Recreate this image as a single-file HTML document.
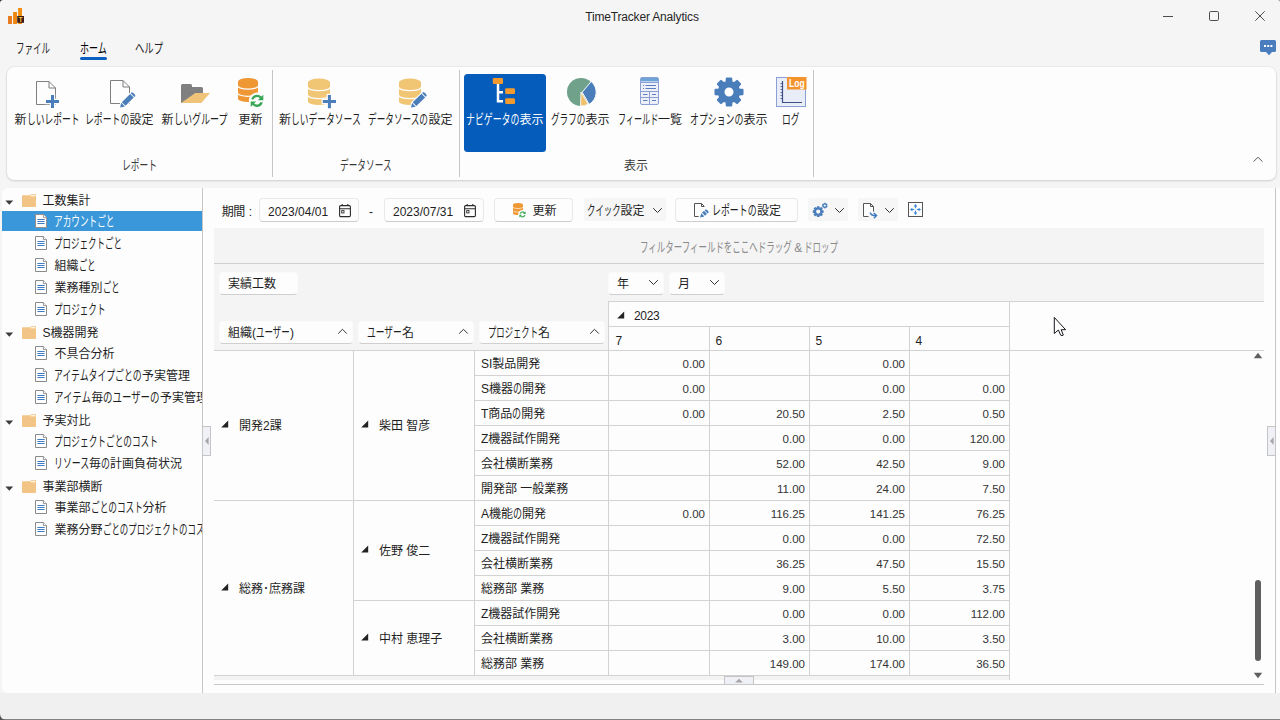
<!DOCTYPE html>
<html lang="ja"><head><meta charset="utf-8"><title>TimeTracker Analytics</title>
<style>
html,body{margin:0;padding:0;}
body{width:1280px;height:720px;overflow:hidden;background:#f5f5f5;font-family:"Liberation Sans","Noto Sans CJK JP",sans-serif;font-size:12px;color:#1f1f1f;}
#app{position:relative;width:1280px;height:720px;overflow:hidden;background:#f5f5f5;}
#app div, #app svg{position:absolute;box-sizing:border-box;}
.t{white-space:nowrap;}
.k{display:inline-block;transform-origin:0 76%;white-space:nowrap;}
.c{text-align:center;}
.r{text-align:right;}
.btn{background:#fdfdfd;border:1px solid #e9e9e9;border-bottom-color:#cdcdcd;border-radius:4px;}
.hl{background:#d2d2d2;}
.fb{border-color:#fafafa;border-bottom-color:#cfcfcf;}

</style></head>
<body>
<div id="app">
<!-- title bar -->
<svg style="left:8px;top:8px" width="18" height="18" viewBox="0 0 18 18">
<rect x="0" y="8" width="4" height="8" fill="#ea7a1f"/><rect x="5.1" y="4" width="3.9" height="12" fill="#ee8614"/><rect x="10.1" y="0" width="3.9" height="16" fill="#f28d10"/>
<rect x="9.2" y="8" width="6.8" height="6.8" fill="#3b1a1a"/><text x="12.6" y="13.9" font-size="7" font-weight="bold" text-anchor="middle" fill="#f8c32c" font-family="Liberation Sans, sans-serif">T</text></svg>
<svg style="left:0;top:0" width="4" height="4" viewBox="0 0 4 4"><path d="M0 0H3.2A3.2 3.2 0 0 0 0 3.2Z" fill="#1a2630"/></svg>
<svg style="left:1277px;top:0" width="3" height="3" viewBox="0 0 3 3"><path d="M3 0H0.8A2.2 2.2 0 0 1 3 2.2Z" fill="#8a8a8a"/></svg>
<div class="t c" style="left:0px;top:7px;height:20px;line-height:20px;width:1284px;font-size:12px;color:#262626;letter-spacing:-0.17px;">TimeTracker Analytics</div>
<svg style="left:1160px;top:8px" width="110" height="16" viewBox="0 0 110 16" fill="none" stroke="#3a3a3a" stroke-width="0.9">
<path d="M3 8.5H13"/><rect x="49.5" y="3.5" width="9" height="9" rx="1.2"/><path d="M95.3 3.3L104.7 12.7M104.7 3.3L95.3 12.7"/></svg>
<svg style="left:1260px;top:40px" width="16" height="16" viewBox="0 0 16 16"><path d="M1.5 0H14.5Q16 0 16 1.5V10.5Q16 12 14.5 12H12L9 15.2L6 12H1.5Q0 12 0 10.5V1.5Q0 0 1.5 0Z" fill="#4a7dbd"/>
<rect x="4" y="5" width="2" height="2" fill="#fff"/><rect x="7.2" y="5" width="2" height="2" fill="#fff"/><rect x="10.4" y="5" width="2" height="2" fill="#fff"/></svg>
<!-- menu -->
<div class="t " style="left:16px;top:39.4px;height:20px;line-height:20px;"><span class="k" style="width:34.0px;transform:scale(0.708,1.12)">ファイル</span></div>
<div class="t " style="left:80px;top:39.4px;height:20px;line-height:20px;color:#000;"><span class="k" style="width:27.0px;transform:scale(0.750,1.12)">ホーム</span></div>
<div class="" style="left:80px;top:57px;width:27px;height:2.6px;background:#0a5fc2;border-radius:1.5px;"></div>
<div class="t " style="left:135px;top:39.4px;height:20px;line-height:20px;"><span class="k" style="width:28.0px;transform:scale(0.778,1.12)">ヘルプ</span></div>
<!-- ribbon -->
<div class="" style="left:7px;top:66.5px;width:1269px;height:113.2px;background:#fdfdfd;border-radius:7px;box-shadow:0 0 0 0.6px rgba(0,0,0,.07),0 1px 2.5px rgba(0,0,0,.13);"></div>
<div class="" style="left:272px;top:70px;width:1px;height:107px;background:#c6c6c6;"></div>
<div class="" style="left:459px;top:70px;width:1px;height:107px;background:#c6c6c6;"></div>
<div class="" style="left:813px;top:70px;width:1px;height:107px;background:#c6c6c6;"></div>
<div class="" style="left:464px;top:74px;width:82px;height:78px;background:#055cbb;border-radius:3.5px;"></div>
<div class="t " style="left:14.5px;top:109.6px;height:20px;line-height:20px;color:#1f1f1f;">新<span class="k" style="width:52.6px;transform:scale(0.731,1.12)">しいレポート</span></div>
<div class="t " style="left:85.3px;top:109.6px;height:20px;line-height:20px;color:#1f1f1f;"><span class="k" style="width:44.2px;transform:scale(0.737,1.12)">レポートの</span>設定</div>
<div class="t " style="left:161.5px;top:109.6px;height:20px;line-height:20px;color:#1f1f1f;">新<span class="k" style="width:54.1px;transform:scale(0.751,1.12)">しいグループ</span></div>
<div class="t " style="left:238.5px;top:109.6px;height:20px;line-height:20px;color:#1f1f1f;">更新</div>
<div class="t " style="left:279px;top:109.6px;height:20px;line-height:20px;color:#1f1f1f;">新<span class="k" style="width:70.1px;transform:scale(0.730,1.12)">しいデータソース</span></div>
<div class="t " style="left:368.1px;top:109.6px;height:20px;line-height:20px;color:#1f1f1f;"><span class="k" style="width:60.4px;transform:scale(0.719,1.12)">データソースの</span>設定</div>
<div class="t " style="left:466.1px;top:109.6px;height:20px;line-height:20px;color:#fff;"><span class="k" style="width:53.4px;transform:scale(0.742,1.12)">ナビゲータの</span>表示</div>
<div class="t " style="left:551.1px;top:109.6px;height:20px;line-height:20px;color:#1f1f1f;"><span class="k" style="width:34.4px;transform:scale(0.717,1.12)">グラフの</span>表示</div>
<div class="t " style="left:617.6px;top:109.6px;height:20px;line-height:20px;color:#1f1f1f;"><span class="k" style="width:40.4px;transform:scale(0.673,1.12)">フィールド</span>一覧</div>
<div class="t " style="left:690.1px;top:109.6px;height:20px;line-height:20px;color:#1f1f1f;"><span class="k" style="width:53.4px;transform:scale(0.742,1.12)">オプションの</span>表示</div>
<div class="t " style="left:781.6px;top:109.6px;height:20px;line-height:20px;color:#1f1f1f;"><span class="k" style="width:17.5px;transform:scale(0.729,1.12)">ログ</span></div>
<div class="t " style="left:122px;top:155.6px;height:20px;line-height:20px;color:#3a3a3a;"><span class="k" style="width:35.0px;transform:scale(0.729,1.12)">レポート</span></div>
<div class="t " style="left:339.5px;top:155.6px;height:20px;line-height:20px;color:#3a3a3a;"><span class="k" style="width:52.0px;transform:scale(0.722,1.12)">データソース</span></div>
<div class="t " style="left:624px;top:155.6px;height:20px;line-height:20px;color:#3a3a3a;">表示</div>
<svg style="left:1251.5px;top:154.2px" width="12" height="10" viewBox="0 0 12 10" fill="none" stroke="#555" stroke-width="1"><path d="M1.6 7.6L6 3.2L10.4 7.6"/></svg>
<!-- ribbon icons -->
<svg style="left:30px;top:76px" width="34" height="34" viewBox="0 0 34 34" ><path d="M6.5 5.5H19L25.5 12V28.5H6.5Z M19 5.5V12H25.5" fill="#fdfdfd" stroke="#7f7f7f" stroke-width="1"/><path d="M21 19h3v5h5v3h-5v5h-3v-5h-5v-3h5z" fill="#4a7ebb" stroke="#fdfdfd" stroke-width="2.4" paint-order="stroke"/></svg>
<svg style="left:104px;top:76px" width="36" height="34" viewBox="0 0 36 34" ><path d="M6.5 4.5H19L25.5 11V27.5H6.5Z M19 4.5V11H25.5" fill="#fdfdfd" stroke="#7f7f7f" stroke-width="1"/><path d="M16.20 31.50 L20.87 30.51 L32.04 19.34 L28.36 15.66 L17.19 26.83 Z" fill="#fdfdfd" stroke="#fdfdfd" stroke-width="2.2" stroke-linejoin="round"/><path d="M16.20 31.50 L20.87 30.51 L17.19 26.83 Z" fill="#4a7ebb"/><path d="M21.50 29.87 L29.78 21.60 L26.10 17.92 L17.83 26.20 Z" fill="#4a7ebb"/><path d="M30.34 21.04 L31.47 19.90 Q30.62 17.08 27.80 16.23 L26.66 17.36 Z" fill="#4a7ebb"/></svg>
<svg style="left:178px;top:80px" width="36" height="28" viewBox="0 0 36 28" ><path d="M3 5.5Q3 4 4.5 4H12.5Q14 4 14 5.5V7H23.5Q25 7 25 8.5V13H17.5L8 23H3Z" fill="#808080"/><path d="M3 23L17.4 13H32L23.3 23Z" fill="#f0c478"/></svg>
<svg style="left:234px;top:74px" width="34" height="36" viewBox="0 0 34 36" ><path d="M4 7.6A10 3.6 0 0 1 24 7.6V24.4A10 3.6 0 0 1 4 24.4Z" fill="#ee9733"/><path d="M3.5 11.5A10.5 3.6 0 0 0 24.5 11.5" fill="none" stroke="#fdfdfd" stroke-width="1.3"/><path d="M3.5 18.7A10.5 3.6 0 0 0 24.5 18.7" fill="none" stroke="#fdfdfd" stroke-width="1.3"/><circle cx="23" cy="26.8" r="8.2" fill="#fdfdfd"/><path d="M17.2 25.2A6 6 0 0 1 27.4 22.6L29.3 20.7V26.2H23.8L25.8 24.2A3.8 3.8 0 0 0 19.5 25.6Z" fill="#3aa757"/><path d="M28.8 28.4A6 6 0 0 1 18.6 31L16.7 32.9V27.4H22.2L20.2 29.4A3.8 3.8 0 0 0 26.5 28Z" fill="#3aa757"/></svg>
<svg style="left:304px;top:74px" width="36" height="36" viewBox="0 0 36 36" ><path d="M4 8.2A11 3.6 0 0 1 26 8.2V27.4A11 3.6 0 0 1 4 27.4Z" fill="#f0c675"/><path d="M3.5 13.06A11.5 3.6 0 0 0 26.5 13.06" fill="none" stroke="#fdfdfd" stroke-width="1.3"/><path d="M3.5 20.98A11.5 3.6 0 0 0 26.5 20.98" fill="none" stroke="#fdfdfd" stroke-width="1.3"/><path d="M23.9 21h3v5.1h5.1v3h-5.1v5.1h-3v-5.1h-5.1v-3h5.1z" fill="#4a7ebb" stroke="#fdfdfd" stroke-width="2.4" paint-order="stroke"/></svg>
<svg style="left:395px;top:74px" width="36" height="36" viewBox="0 0 36 36" ><path d="M4 8.2A11 3.6 0 0 1 26 8.2V27.4A11 3.6 0 0 1 4 27.4Z" fill="#f0c675"/><path d="M3.5 13.06A11.5 3.6 0 0 0 26.5 13.06" fill="none" stroke="#fdfdfd" stroke-width="1.3"/><path d="M3.5 20.98A11.5 3.6 0 0 0 26.5 20.98" fill="none" stroke="#fdfdfd" stroke-width="1.3"/><path d="M16.00 33.60 L20.68 32.66 L32.42 21.16 L28.78 17.44 L17.04 28.94 Z" fill="#fdfdfd" stroke="#fdfdfd" stroke-width="2.2" stroke-linejoin="round"/><path d="M16.00 33.60 L20.68 32.66 L17.04 28.94 Z" fill="#4a7ebb"/><path d="M21.32 32.03 L30.13 23.40 L26.49 19.68 L17.68 28.31 Z" fill="#4a7ebb"/><path d="M30.70 22.84 L31.85 21.72 Q31.03 18.88 28.21 18.00 L27.07 19.12 Z" fill="#4a7ebb"/></svg>
<svg style="left:490px;top:76px" width="28" height="30" viewBox="0 0 28 30" ><rect x="2.8" y="2" width="10.2" height="6" rx="1.2" fill="#f39a2e"/><rect x="15.2" y="12.2" width="9.8" height="5.8" rx="1.2" fill="#f39a2e"/><rect x="15.2" y="22.2" width="9.8" height="5.8" rx="1.2" fill="#f39a2e"/><path d="M8 8V25.2H13M8 16.2H13" fill="none" stroke="#fff" stroke-width="2.5"/></svg>
<svg style="left:565px;top:76px" width="34" height="32" viewBox="0 0 34 32" ><circle cx="16" cy="16" r="14" fill="#6fa18b"/><path d="M16 16L23.00 28.12 A14 14 0 0 1 15.51 29.99 Z" fill="#f0c06a" stroke="#fdfdfd" stroke-width="0.9"/><path d="M17.2 16.2L26.20 5.48 A14 14 0 0 1 24.20 28.32 Z" fill="#4a7ebb" stroke="#fdfdfd" stroke-width="1"/></svg>
<svg style="left:638px;top:75px" width="24" height="32" viewBox="0 0 24 32" ><rect x="2.5" y="2.5" width="18" height="27" rx="1.5" fill="#edf0f9" stroke="#8c9fd2" stroke-width="1"/><rect x="3" y="3" width="17" height="3.4" fill="#6fa3d8"/><path d="M3 7.5H20M3 16.5H20M3 22.5H20M11.5 16.5V29" stroke="#8c9fd2" stroke-width="1" fill="none"/><path d="M5 10.5H6M7.5 10.5H18M5 13.5H6M7.5 13.5H18M5 19.5H9.5M14 19.5H18M5 25.5H9.5M14 25.5H18" stroke="#5c7fc4" stroke-width="1" fill="none"/></svg>
<svg style="left:712px;top:75px" width="34" height="34" viewBox="0 0 34 34" ><path d="M14.87 3.57L19.13 3.57L19.38 7.08L22.33 8.30L24.99 6.00L28.00 9.01L25.70 11.67L26.92 14.62L30.43 14.87L30.43 19.13L26.92 19.38L25.70 22.33L28.00 24.99L24.99 28.00L22.33 25.70L19.38 26.92L19.13 30.43L14.87 30.43L14.62 26.92L11.67 25.70L9.01 28.00L6.00 24.99L8.30 22.33L7.08 19.38L3.57 19.13L3.57 14.87L7.08 14.62L8.30 11.67L6.00 9.01L9.01 6.00L11.67 8.30L14.62 7.08ZM11.4 17a5.6 5.6 0 1 0 11.2 0a5.6 5.6 0 1 0 -11.2 0Z" fill="#4a7ebb" fill-rule="evenodd" stroke="#4a7ebb" stroke-width="2.2" stroke-linejoin="round"/></svg>
<svg style="left:774px;top:75px" width="34" height="34" viewBox="0 0 34 34" ><rect x="2.5" y="2.5" width="29" height="29" fill="#e9edf8" stroke="#8c9fd2" stroke-width="1"/><path d="M8.5 6V27.5H28" fill="none" stroke="#3d4f86" stroke-width="1.2"/><path d="M6.5 8.5H8.5M6.5 11.5H8.5M6.5 14.5H8.5M6.5 17.5H8.5M6.5 20.5H8.5M6.5 23.5H8.5" stroke="#3d4f86" stroke-width="0.8"/><rect x="13" y="2" width="19.5" height="12.5" fill="#f2932b"/><text x="22.8" y="11.6" font-size="10" text-anchor="middle" fill="#fff" font-family="Liberation Sans, sans-serif" font-weight="bold" textLength="15.5" lengthAdjust="spacingAndGlyphs">Log</text></svg>
<!-- tree -->
<div class="" style="left:2px;top:188px;width:201px;height:505px;background:#fdfdfd;border-radius:6px 0 0 6px;"></div>
<div class="" style="left:202px;top:188px;width:1px;height:505px;background:#c6c6c6;"></div>
<div class="" style="left:203px;top:188px;width:1077px;height:505px;background:#fdfdfd;"></div>
<div class="" style="left:2px;top:211px;width:200px;height:20px;background:#3a97d9;"></div>
<div style="left:2px;top:188px;width:200px;height:505px;overflow:hidden;">
<svg style="left:2.5px;top:11.5px" width="9" height="6" viewBox="0 0 9 6"><path d="M0.4 0.6H8.2L4.3 4.7Z" fill="#3c3c3c"/></svg>
<svg style="left:20px;top:5.5px" width="14" height="13" viewBox="0 0 14 13"><path d="M0 2.2Q0 1.2 1 1.2H8L10 0H13Q14 0 14 1V12Q14 13 13 13H1Q0 13 0 12Z" fill="#f2c486"/><path d="M8 1.2L10 0H13Q14 0 14 1V3H8.2Z" fill="#f4cf9a"/><rect x="9" y="1" width="4" height="1.2" fill="#fff6e8"/></svg>
<div class="t " style="left:40.5px;top:2.2px;height:22px;line-height:22px;color:#1f1f1f;">工数集計</div>
<svg style="left:33px;top:25.5px" width="12" height="14" viewBox="0 0 12 14"><path d="M0.5 0.5H8.4L11.5 3.6V13.5H0.5Z" fill="#fff" stroke="#9a8f88" stroke-width="1"/><path d="M8.4 0.5V3.6H11.5" fill="#fff" stroke="#9a8f88" stroke-width="0.9"/><path d="M2.4 5.5H9.6M2.4 7.5H9.6M2.4 9.5H9.6" stroke="#3f7cc4" stroke-width="1"/></svg>
<div class="t " style="left:51.5px;top:23.4px;height:22px;line-height:22px;color:#fff;"><span class="k" style="width:60.5px;transform:scale(0.720,1.12)">アカウントごと</span></div>
<svg style="left:33px;top:47.5px" width="12" height="14" viewBox="0 0 12 14"><path d="M0.5 0.5H8.4L11.5 3.6V13.5H0.5Z" fill="#fff" stroke="#8a8a8a" stroke-width="1"/><path d="M8.4 0.5V3.6H11.5" fill="#fff" stroke="#8a8a8a" stroke-width="0.9"/><path d="M2.4 5.5H9.6M2.4 7.5H9.6M2.4 9.5H9.6" stroke="#3f7cc4" stroke-width="1"/></svg>
<div class="t " style="left:51.5px;top:45.4px;height:22px;line-height:22px;color:#1f1f1f;"><span class="k" style="width:68.0px;transform:scale(0.708,1.12)">プロジェクトごと</span></div>
<svg style="left:33px;top:69.5px" width="12" height="14" viewBox="0 0 12 14"><path d="M0.5 0.5H8.4L11.5 3.6V13.5H0.5Z" fill="#fff" stroke="#8a8a8a" stroke-width="1"/><path d="M8.4 0.5V3.6H11.5" fill="#fff" stroke="#8a8a8a" stroke-width="0.9"/><path d="M2.4 5.5H9.6M2.4 7.5H9.6M2.4 9.5H9.6" stroke="#3f7cc4" stroke-width="1"/></svg>
<div class="t " style="left:52.5px;top:67.4px;height:22px;line-height:22px;color:#1f1f1f;">組織<span class="k" style="width:16.5px;transform:scale(0.688,1.12)">ごと</span></div>
<svg style="left:33px;top:91.5px" width="12" height="14" viewBox="0 0 12 14"><path d="M0.5 0.5H8.4L11.5 3.6V13.5H0.5Z" fill="#fff" stroke="#8a8a8a" stroke-width="1"/><path d="M8.4 0.5V3.6H11.5" fill="#fff" stroke="#8a8a8a" stroke-width="0.9"/><path d="M2.4 5.5H9.6M2.4 7.5H9.6M2.4 9.5H9.6" stroke="#3f7cc4" stroke-width="1"/></svg>
<div class="t " style="left:52.5px;top:89.4px;height:22px;line-height:22px;color:#1f1f1f;">業務種別<span class="k" style="width:16.5px;transform:scale(0.688,1.12)">ごと</span></div>
<svg style="left:33px;top:113.5px" width="12" height="14" viewBox="0 0 12 14"><path d="M0.5 0.5H8.4L11.5 3.6V13.5H0.5Z" fill="#fff" stroke="#8a8a8a" stroke-width="1"/><path d="M8.4 0.5V3.6H11.5" fill="#fff" stroke="#8a8a8a" stroke-width="0.9"/><path d="M2.4 5.5H9.6M2.4 7.5H9.6M2.4 9.5H9.6" stroke="#3f7cc4" stroke-width="1"/></svg>
<div class="t " style="left:51.5px;top:111.4px;height:22px;line-height:22px;color:#1f1f1f;"><span class="k" style="width:51.5px;transform:scale(0.715,1.12)">プロジェクト</span></div>
<svg style="left:2.5px;top:143.5px" width="9" height="6" viewBox="0 0 9 6"><path d="M0.4 0.6H8.2L4.3 4.7Z" fill="#3c3c3c"/></svg>
<svg style="left:20px;top:137.5px" width="14" height="13" viewBox="0 0 14 13"><path d="M0 2.2Q0 1.2 1 1.2H8L10 0H13Q14 0 14 1V12Q14 13 13 13H1Q0 13 0 12Z" fill="#f2c486"/><path d="M8 1.2L10 0H13Q14 0 14 1V3H8.2Z" fill="#f4cf9a"/><rect x="9" y="1" width="4" height="1.2" fill="#fff6e8"/></svg>
<div class="t " style="left:40.5px;top:134.2px;height:22px;line-height:22px;color:#1f1f1f;">S機器開発</div>
<svg style="left:33px;top:157.5px" width="12" height="14" viewBox="0 0 12 14"><path d="M0.5 0.5H8.4L11.5 3.6V13.5H0.5Z" fill="#fff" stroke="#8a8a8a" stroke-width="1"/><path d="M8.4 0.5V3.6H11.5" fill="#fff" stroke="#8a8a8a" stroke-width="0.9"/><path d="M2.4 5.5H9.6M2.4 7.5H9.6M2.4 9.5H9.6" stroke="#3f7cc4" stroke-width="1"/></svg>
<div class="t " style="left:52.5px;top:155.4px;height:22px;line-height:22px;color:#1f1f1f;">不具合分析</div>
<svg style="left:33px;top:179.5px" width="12" height="14" viewBox="0 0 12 14"><path d="M0.5 0.5H8.4L11.5 3.6V13.5H0.5Z" fill="#fff" stroke="#8a8a8a" stroke-width="1"/><path d="M8.4 0.5V3.6H11.5" fill="#fff" stroke="#8a8a8a" stroke-width="0.9"/><path d="M2.4 5.5H9.6M2.4 7.5H9.6M2.4 9.5H9.6" stroke="#3f7cc4" stroke-width="1"/></svg>
<div class="t " style="left:51.5px;top:177.4px;height:22px;line-height:22px;color:#1f1f1f;"><span class="k" style="width:88.5px;transform:scale(0.738,1.12)">アイテムタイプごとの</span>予実管理</div>
<svg style="left:33px;top:201.5px" width="12" height="14" viewBox="0 0 12 14"><path d="M0.5 0.5H8.4L11.5 3.6V13.5H0.5Z" fill="#fff" stroke="#8a8a8a" stroke-width="1"/><path d="M8.4 0.5V3.6H11.5" fill="#fff" stroke="#8a8a8a" stroke-width="0.9"/><path d="M2.4 5.5H9.6M2.4 7.5H9.6M2.4 9.5H9.6" stroke="#3f7cc4" stroke-width="1"/></svg>
<div class="t " style="left:51.5px;top:199.4px;height:22px;line-height:22px;color:#1f1f1f;"><span class="k" style="width:37.8px;transform:scale(0.787,1.12)">アイテム</span>毎<span class="k" style="width:56.7px;transform:scale(0.787,1.12)">のユーザーの</span>予実管理</div>
<svg style="left:2.5px;top:231.5px" width="9" height="6" viewBox="0 0 9 6"><path d="M0.4 0.6H8.2L4.3 4.7Z" fill="#3c3c3c"/></svg>
<svg style="left:20px;top:225.5px" width="14" height="13" viewBox="0 0 14 13"><path d="M0 2.2Q0 1.2 1 1.2H8L10 0H13Q14 0 14 1V12Q14 13 13 13H1Q0 13 0 12Z" fill="#f2c486"/><path d="M8 1.2L10 0H13Q14 0 14 1V3H8.2Z" fill="#f4cf9a"/><rect x="9" y="1" width="4" height="1.2" fill="#fff6e8"/></svg>
<div class="t " style="left:40.5px;top:222.2px;height:22px;line-height:22px;color:#1f1f1f;">予実対比</div>
<svg style="left:33px;top:245.5px" width="12" height="14" viewBox="0 0 12 14"><path d="M0.5 0.5H8.4L11.5 3.6V13.5H0.5Z" fill="#fff" stroke="#8a8a8a" stroke-width="1"/><path d="M8.4 0.5V3.6H11.5" fill="#fff" stroke="#8a8a8a" stroke-width="0.9"/><path d="M2.4 5.5H9.6M2.4 7.5H9.6M2.4 9.5H9.6" stroke="#3f7cc4" stroke-width="1"/></svg>
<div class="t " style="left:51.5px;top:243.4px;height:22px;line-height:22px;color:#1f1f1f;"><span class="k" style="width:104.0px;transform:scale(0.722,1.12)">プロジェクトごとのコスト</span></div>
<svg style="left:33px;top:267.5px" width="12" height="14" viewBox="0 0 12 14"><path d="M0.5 0.5H8.4L11.5 3.6V13.5H0.5Z" fill="#fff" stroke="#8a8a8a" stroke-width="1"/><path d="M8.4 0.5V3.6H11.5" fill="#fff" stroke="#8a8a8a" stroke-width="0.9"/><path d="M2.4 5.5H9.6M2.4 7.5H9.6M2.4 9.5H9.6" stroke="#3f7cc4" stroke-width="1"/></svg>
<div class="t " style="left:51.5px;top:265.4px;height:22px;line-height:22px;color:#1f1f1f;"><span class="k" style="width:35.6px;transform:scale(0.742,1.12)">リソース</span>毎<span class="k" style="width:8.9px;transform:scale(0.742,1.12)">の</span>計画負荷状況</div>
<svg style="left:2.5px;top:297.5px" width="9" height="6" viewBox="0 0 9 6"><path d="M0.4 0.6H8.2L4.3 4.7Z" fill="#3c3c3c"/></svg>
<svg style="left:20px;top:291.5px" width="14" height="13" viewBox="0 0 14 13"><path d="M0 2.2Q0 1.2 1 1.2H8L10 0H13Q14 0 14 1V12Q14 13 13 13H1Q0 13 0 12Z" fill="#f2c486"/><path d="M8 1.2L10 0H13Q14 0 14 1V3H8.2Z" fill="#f4cf9a"/><rect x="9" y="1" width="4" height="1.2" fill="#fff6e8"/></svg>
<div class="t " style="left:40.5px;top:288.2px;height:22px;line-height:22px;color:#1f1f1f;">事業部横断</div>
<svg style="left:33px;top:311.5px" width="12" height="14" viewBox="0 0 12 14"><path d="M0.5 0.5H8.4L11.5 3.6V13.5H0.5Z" fill="#fff" stroke="#8a8a8a" stroke-width="1"/><path d="M8.4 0.5V3.6H11.5" fill="#fff" stroke="#8a8a8a" stroke-width="0.9"/><path d="M2.4 5.5H9.6M2.4 7.5H9.6M2.4 9.5H9.6" stroke="#3f7cc4" stroke-width="1"/></svg>
<div class="t " style="left:52.5px;top:309.4px;height:22px;line-height:22px;color:#1f1f1f;">事業部<span class="k" style="width:52.0px;transform:scale(0.722,1.12)">ごとのコスト</span>分析</div>
<svg style="left:33px;top:333.5px" width="12" height="14" viewBox="0 0 12 14"><path d="M0.5 0.5H8.4L11.5 3.6V13.5H0.5Z" fill="#fff" stroke="#8a8a8a" stroke-width="1"/><path d="M8.4 0.5V3.6H11.5" fill="#fff" stroke="#8a8a8a" stroke-width="0.9"/><path d="M2.4 5.5H9.6M2.4 7.5H9.6M2.4 9.5H9.6" stroke="#3f7cc4" stroke-width="1"/></svg>
<div class="t " style="left:52.5px;top:331.4px;height:22px;line-height:22px;color:#1f1f1f;">業務分野<span class="k" style="width:110.0px;transform:scale(0.705,1.12)">ごとのプロジェクトのコスト</span></div>
</div>
<div class="" style="left:203px;top:426px;width:8px;height:30px;background:#f0f1f6;border:1px solid #c4c4c4;border-left:none;"></div>
<svg style="left:204px;top:436px" width="6" height="10" viewBox="0 0 6 10"><path d="M4.6 1V9L1 5Z" fill="#a6a6a6"/></svg>
<div class="" style="left:1275px;top:188px;width:1px;height:505px;background:#c6c6c6;"></div>
<div class="" style="left:1267px;top:426px;width:9px;height:30px;background:#f0f1f6;border:1px solid #c4c4c4;"></div>
<svg style="left:1269px;top:436px" width="6" height="10" viewBox="0 0 6 10"><path d="M4.6 1V9L1 5Z" fill="#a6a6a6"/></svg>
<div class="" style="left:0px;top:693px;width:1280px;height:27px;background:#f0f0f0;"></div>
<div class="" style="left:0px;top:718.5px;width:1280px;height:1.5px;background:#808080;"></div>
<svg style="left:0;top:714px" width="6" height="6" viewBox="0 0 6 6"><path d="M0 0A6 6 0 0 0 6 6H0Z" fill="#555"/></svg>
<!-- toolbar -->
<div class="t " style="left:221.8px;top:200.5px;height:22px;line-height:22px;letter-spacing:-0.5px;word-spacing:1px;">期間 :</div>
<div class="btn" style="left:258.5px;top:198px;width:100.5px;height:24px;"></div>
<div class="t " style="left:268px;top:200.9px;height:22px;line-height:22px;">2023/04/01</div>
<svg style="left:338px;top:202.5px" width="14" height="15" viewBox="0 0 14 15" fill="none" stroke="#2b2b2b" stroke-width="1.1"><rect x="1.6" y="2.6" width="10.8" height="11" rx="1.2"/><path d="M1.6 5.7H12.4M4.2 0.9V3M9.8 0.9V3"/><rect x="3.7" y="7.6" width="2.3" height="2.3" stroke-width="0.9"/></svg>
<div class="t " style="left:369px;top:200.9px;height:22px;line-height:22px;">-</div>
<div class="btn" style="left:383.5px;top:198px;width:100.5px;height:24px;"></div>
<div class="t " style="left:393px;top:200.9px;height:22px;line-height:22px;">2023/07/31</div>
<svg style="left:463px;top:202.5px" width="14" height="15" viewBox="0 0 14 15" fill="none" stroke="#2b2b2b" stroke-width="1.1"><rect x="1.6" y="2.6" width="10.8" height="11" rx="1.2"/><path d="M1.6 5.7H12.4M4.2 0.9V3M9.8 0.9V3"/><rect x="3.7" y="7.6" width="2.3" height="2.3" stroke-width="0.9"/></svg>
<div class="btn" style="left:494px;top:198px;width:78.5px;height:24px;"></div>
<svg style="left:510.6px;top:200.6px" width="17" height="18" viewBox="0 0 34 36"><path d="M4 7.6A10 3.6 0 0 1 24 7.6V24.4A10 3.6 0 0 1 4 24.4Z" fill="#ee9733"/><path d="M3.5 11.5A10.5 3.6 0 0 0 24.5 11.5" fill="none" stroke="#fdfdfd" stroke-width="1.3"/><path d="M3.5 18.7A10.5 3.6 0 0 0 24.5 18.7" fill="none" stroke="#fdfdfd" stroke-width="1.3"/><circle cx="23" cy="26.8" r="8.6" fill="#fdfdfd"/><path d="M17.2 25.2A6 6 0 0 1 27.4 22.6L29.3 20.7V26.2H23.8L25.8 24.2A3.8 3.8 0 0 0 19.5 25.6Z" fill="#3aa757"/><path d="M28.8 28.4A6 6 0 0 1 18.6 31L16.7 32.9V27.4H22.2L20.2 29.4A3.8 3.8 0 0 0 26.5 28Z" fill="#3aa757"/></svg>
<div class="t " style="left:532.5px;top:200.2px;height:22px;line-height:22px;">更新</div>
<div class="" style="left:583.5px;top:198px;width:82px;height:23px;background:#f6f6f6;border-radius:2px;"></div>
<div class="t " style="left:587px;top:200.2px;height:22px;line-height:22px;"><span class="k" style="width:33.5px;transform:scale(0.698,1.12)">クイック</span>設定</div>
<svg style="left:651.5px;top:207px" width="11" height="7" viewBox="0 0 11 7" fill="none" stroke="#333" stroke-width="1"><path d="M1.2 1.2L5.5 5.5L9.8 1.2"/></svg>
<div class="btn" style="left:675px;top:198px;width:122.5px;height:24px;"></div>
<svg style="left:693px;top:202px" width="17" height="17" viewBox="0 0 17 17"><path d="M1.5 1.5H8.5L11.5 4.5V14.5H1.5Z M8.5 1.5V4.5H11.5" fill="#fdfdfd" stroke="#555" stroke-width="1"/><path d="M6 16L15 7L12 4L5 12Z" fill="#fdfdfd"/><path d="M6.90 15.50 L11.31 14.42 L16.34 9.90 L13.46 6.70 L8.43 11.23 Z" fill="#fdfdfd" stroke="#fdfdfd" stroke-width="1.6" stroke-linejoin="round"/><path d="M6.90 15.50 L11.31 14.42 L8.43 11.23 Z" fill="#4a7ebb"/><path d="M11.98 13.82 L13.96 12.04 L11.08 8.84 L9.10 10.62 Z" fill="#4a7ebb"/><path d="M14.55 11.50 L15.74 10.43 Q15.35 7.90 12.87 7.24 L11.68 8.31 Z" fill="#4a7ebb"/></svg>
<div class="t " style="left:712.4px;top:200.2px;height:22px;line-height:22px;"><span class="k" style="width:44.6px;transform:scale(0.743,1.12)">レポートの</span>設定</div>
<div class="" style="left:808px;top:198px;width:40px;height:23px;background:#f6f6f6;border-radius:2px;"></div>
<svg style="left:811px;top:201px" width="18" height="18" viewBox="0 0 18 18"><path d="M6.43 5.76L7.97 5.76L8.06 7.00L9.13 7.45L10.08 6.64L11.16 7.72L10.35 8.67L10.80 9.74L12.04 9.83L12.04 11.37L10.80 11.46L10.35 12.53L11.16 13.48L10.08 14.56L9.13 13.75L8.06 14.20L7.97 15.44L6.43 15.44L6.34 14.20L5.27 13.75L4.32 14.56L3.24 13.48L4.05 12.53L3.60 11.46L2.36 11.37L2.36 9.83L3.60 9.74L4.05 8.67L3.24 7.72L4.32 6.64L5.27 7.45L6.34 7.00ZM4.5 10.6a2.7 2.7 0 1 0 5.4 0a2.7 2.7 0 1 0 -5.4 0Z" fill="#4a7ebb" fill-rule="evenodd" stroke="#4a7ebb" stroke-width="1.2" stroke-linejoin="round"/><path d="M13.28 2.15L14.32 2.15L14.39 2.79L15.07 3.19L15.66 2.93L16.18 3.83L15.66 4.20L15.66 5.00L16.18 5.37L15.66 6.27L15.07 6.01L14.39 6.41L14.32 7.05L13.28 7.05L13.21 6.41L12.53 6.01L11.94 6.27L11.42 5.37L11.94 5.00L11.94 4.20L11.42 3.83L11.94 2.93L12.53 3.19L13.21 2.79ZM12.3 4.6a1.5 1.5 0 1 0 3 0a1.5 1.5 0 1 0 -3 0Z" fill="#4a7ebb" fill-rule="evenodd" stroke="#4a7ebb" stroke-width="0.9" stroke-linejoin="round"/></svg>
<svg style="left:834px;top:207px" width="11" height="7" viewBox="0 0 11 7" fill="none" stroke="#333" stroke-width="1"><path d="M1.2 1.2L5.5 5.5L9.8 1.2"/></svg>
<div class="" style="left:858px;top:198px;width:40px;height:23px;background:#f6f6f6;border-radius:2px;"></div>
<svg style="left:862px;top:202px" width="18" height="18" viewBox="0 0 18 18"><path d="M1.5 1.5H8.5L11.5 4.5V14.5H1.5Z M8.5 1.5V4.5H11.5" fill="#fdfdfd" stroke="#555" stroke-width="1"/><rect x="6.5" y="9.6" width="11" height="8" fill="#f6f6f6"/><path d="M8.3 10.6Q8.6 13.6 14 13.6" fill="none" stroke="#3f78c0" stroke-width="1.4"/><path d="M11.8 10.9L14.6 13.6L11.8 16.3" fill="none" stroke="#3f78c0" stroke-width="1.4"/></svg>
<svg style="left:884px;top:207px" width="11" height="7" viewBox="0 0 11 7" fill="none" stroke="#333" stroke-width="1"><path d="M1.2 1.2L5.5 5.5L9.8 1.2"/></svg>
<svg style="left:908px;top:202px" width="15" height="15" viewBox="0 0 15 15"><rect x="0.5" y="0.5" width="14" height="14" fill="#fdfdfd" stroke="#555" stroke-width="1"/><path d="M7.5 2L9.3 4.4H5.7ZM7.5 13L9.3 10.6H5.7ZM2 7.5L4.4 5.7V9.3ZM13 7.5L10.6 5.7V9.3Z" fill="#2f7fd6"/><path d="M7.5 4.2V6.2M7.5 8.8V10.8M4.2 7.5H6.2M8.8 7.5H10.8" stroke="#2f7fd6" stroke-width="1.1"/></svg>
<!-- pivot header -->
<div class="" style="left:214px;top:228px;width:1050px;height:123px;background:#f4f4f4;"></div>
<div class="" style="left:214px;top:263px;width:1050px;height:1px;background:#cfcfcf;"></div>
<div class="t c" style="left:214px;top:237.2px;height:22px;line-height:22px;width:1050px;color:#8a8a8a;word-spacing:-1.6px;"><span class="k" style="width:152.5px;transform:scale(0.706,1.12)">フィルターフィールドをここへドラッグ</span> &amp; <span class="k" style="width:33.9px;transform:scale(0.706,1.12)">ドロップ</span></div>
<div class="btn fb" style="left:219px;top:271.8px;width:78.5px;height:22.8px;"></div>
<div class="t " style="left:228px;top:272.7px;height:22px;line-height:22px;">実績工数</div>
<div class="btn fb" style="left:219px;top:320.8px;width:133.5px;height:22.8px;"></div>
<div class="t " style="left:228px;top:321.7px;height:22px;line-height:22px;">組織(<span class="k" style="width:34.0px;transform:scale(0.709,1.12)">ユーザー</span>)</div>
<svg style="left:336.5px;top:327.7px" width="11" height="7" viewBox="0 0 11 7" fill="none" stroke="#333" stroke-width="1"><path d="M1.2 5.6L5.5 1.3L9.8 5.6"/></svg>
<div class="btn fb" style="left:358px;top:320.8px;width:115.5px;height:22.8px;"></div>
<div class="t " style="left:367px;top:321.7px;height:22px;line-height:22px;"><span class="k" style="width:35.0px;transform:scale(0.729,1.12)">ユーザー</span>名</div>
<svg style="left:457.5px;top:327.7px" width="11" height="7" viewBox="0 0 11 7" fill="none" stroke="#333" stroke-width="1"><path d="M1.2 5.6L5.5 1.3L9.8 5.6"/></svg>
<div class="btn fb" style="left:479px;top:320.8px;width:125.5px;height:22.8px;"></div>
<div class="t " style="left:488px;top:321.7px;height:22px;line-height:22px;"><span class="k" style="width:50.0px;transform:scale(0.694,1.12)">プロジェクト</span>名</div>
<svg style="left:588.5px;top:327.7px" width="11" height="7" viewBox="0 0 11 7" fill="none" stroke="#333" stroke-width="1"><path d="M1.2 5.6L5.5 1.3L9.8 5.6"/></svg>
<div class="btn fb" style="left:608px;top:271.8px;width:55.5px;height:22.8px;"></div>
<div class="t " style="left:617px;top:272.7px;height:22px;line-height:22px;">年</div>
<svg style="left:647.7px;top:279.3px" width="11" height="7" viewBox="0 0 11 7" fill="none" stroke="#333" stroke-width="1"><path d="M1.2 1.2L5.5 5.5L9.8 1.2"/></svg>
<div class="btn fb" style="left:669px;top:271.8px;width:55.5px;height:22.8px;"></div>
<div class="t " style="left:678px;top:272.7px;height:22px;line-height:22px;">月</div>
<svg style="left:708.7px;top:279.3px" width="11" height="7" viewBox="0 0 11 7" fill="none" stroke="#333" stroke-width="1"><path d="M1.2 1.2L5.5 5.5L9.8 1.2"/></svg>
<div class="" style="left:608px;top:301px;width:656px;height:50px;background:#fdfdfd;"></div>
<div class="" style="left:608px;top:301px;width:656px;height:1px;background:#d2d2d2;"></div>
<div class="" style="left:214px;top:350px;width:1050px;height:1px;background:#d2d2d2;"></div>
<div class="" style="left:608px;top:326px;width:402px;height:1px;background:#d2d2d2;"></div>
<div class="" style="left:608px;top:301px;width:1px;height:379px;background:#d2d2d2;"></div>
<div class="" style="left:709px;top:326px;width:1px;height:354px;background:#d2d2d2;"></div>
<div class="" style="left:809px;top:326px;width:1px;height:354px;background:#d2d2d2;"></div>
<div class="" style="left:909px;top:326px;width:1px;height:354px;background:#d2d2d2;"></div>
<div class="" style="left:1009px;top:301px;width:1px;height:379px;background:#d2d2d2;"></div>
<svg style="left:616.7px;top:310.8px" width="8" height="8" viewBox="0 0 8 8"><path d="M7.2 0.4V7.4H0.2Z" fill="#222"/></svg>
<div class="t " style="left:634px;top:304.8px;height:22px;line-height:22px;letter-spacing:-0.3px;">2023</div>
<div class="t " style="left:615.5px;top:329.8px;height:22px;line-height:22px;">7</div>
<div class="t " style="left:715.5px;top:329.8px;height:22px;line-height:22px;">6</div>
<div class="t " style="left:815.5px;top:329.8px;height:22px;line-height:22px;">5</div>
<div class="t " style="left:915.5px;top:329.8px;height:22px;line-height:22px;">4</div>
<!-- grid -->
<div class="t " style="left:481px;top:353.2px;height:23px;line-height:23px;">SI製品開発</div>
<div class="t r" style="left:609px;top:353.1px;height:23px;line-height:23px;width:96px;font-size:11.5px;color:#333;">0.00</div>
<div class="t r" style="left:809px;top:353.1px;height:23px;line-height:23px;width:96px;font-size:11.5px;color:#333;">0.00</div>
<div class="t " style="left:481px;top:378.2px;height:23px;line-height:23px;">S機器<span class="k" style="width:9.0px;transform:scale(0.750,1.12)">の</span>開発</div>
<div class="t r" style="left:609px;top:378.1px;height:23px;line-height:23px;width:96px;font-size:11.5px;color:#333;">0.00</div>
<div class="t r" style="left:809px;top:378.1px;height:23px;line-height:23px;width:96px;font-size:11.5px;color:#333;">0.00</div>
<div class="t r" style="left:909px;top:378.1px;height:23px;line-height:23px;width:96px;font-size:11.5px;color:#333;">0.00</div>
<div class="" style="left:474px;top:375px;width:536px;height:1px;background:#d2d2d2;"></div>
<div class="t " style="left:481px;top:403.2px;height:23px;line-height:23px;">T商品<span class="k" style="width:9.0px;transform:scale(0.750,1.12)">の</span>開発</div>
<div class="t r" style="left:609px;top:403.1px;height:23px;line-height:23px;width:96px;font-size:11.5px;color:#333;">0.00</div>
<div class="t r" style="left:709px;top:403.1px;height:23px;line-height:23px;width:96px;font-size:11.5px;color:#333;">20.50</div>
<div class="t r" style="left:809px;top:403.1px;height:23px;line-height:23px;width:96px;font-size:11.5px;color:#333;">2.50</div>
<div class="t r" style="left:909px;top:403.1px;height:23px;line-height:23px;width:96px;font-size:11.5px;color:#333;">0.50</div>
<div class="" style="left:474px;top:400px;width:536px;height:1px;background:#d2d2d2;"></div>
<div class="t " style="left:481px;top:428.2px;height:23px;line-height:23px;">Z機器試作開発</div>
<div class="t r" style="left:709px;top:428.1px;height:23px;line-height:23px;width:96px;font-size:11.5px;color:#333;">0.00</div>
<div class="t r" style="left:809px;top:428.1px;height:23px;line-height:23px;width:96px;font-size:11.5px;color:#333;">0.00</div>
<div class="t r" style="left:909px;top:428.1px;height:23px;line-height:23px;width:96px;font-size:11.5px;color:#333;">120.00</div>
<div class="" style="left:474px;top:425px;width:536px;height:1px;background:#d2d2d2;"></div>
<div class="t " style="left:481px;top:453.2px;height:23px;line-height:23px;">会社横断業務</div>
<div class="t r" style="left:709px;top:453.1px;height:23px;line-height:23px;width:96px;font-size:11.5px;color:#333;">52.00</div>
<div class="t r" style="left:809px;top:453.1px;height:23px;line-height:23px;width:96px;font-size:11.5px;color:#333;">42.50</div>
<div class="t r" style="left:909px;top:453.1px;height:23px;line-height:23px;width:96px;font-size:11.5px;color:#333;">9.00</div>
<div class="" style="left:474px;top:450px;width:536px;height:1px;background:#d2d2d2;"></div>
<div class="t " style="left:481px;top:478.2px;height:23px;line-height:23px;">開発部 一般業務</div>
<div class="t r" style="left:709px;top:478.1px;height:23px;line-height:23px;width:96px;font-size:11.5px;color:#333;">11.00</div>
<div class="t r" style="left:809px;top:478.1px;height:23px;line-height:23px;width:96px;font-size:11.5px;color:#333;">24.00</div>
<div class="t r" style="left:909px;top:478.1px;height:23px;line-height:23px;width:96px;font-size:11.5px;color:#333;">7.50</div>
<div class="" style="left:474px;top:475px;width:536px;height:1px;background:#d2d2d2;"></div>
<div class="t " style="left:481px;top:503.2px;height:23px;line-height:23px;">A機能<span class="k" style="width:9.0px;transform:scale(0.750,1.12)">の</span>開発</div>
<div class="t r" style="left:609px;top:503.1px;height:23px;line-height:23px;width:96px;font-size:11.5px;color:#333;">0.00</div>
<div class="t r" style="left:709px;top:503.1px;height:23px;line-height:23px;width:96px;font-size:11.5px;color:#333;">116.25</div>
<div class="t r" style="left:809px;top:503.1px;height:23px;line-height:23px;width:96px;font-size:11.5px;color:#333;">141.25</div>
<div class="t r" style="left:909px;top:503.1px;height:23px;line-height:23px;width:96px;font-size:11.5px;color:#333;">76.25</div>
<div class="" style="left:474px;top:500px;width:536px;height:1px;background:#d2d2d2;"></div>
<div class="t " style="left:481px;top:528.2px;height:23px;line-height:23px;">Z機器試作開発</div>
<div class="t r" style="left:709px;top:528.1px;height:23px;line-height:23px;width:96px;font-size:11.5px;color:#333;">0.00</div>
<div class="t r" style="left:809px;top:528.1px;height:23px;line-height:23px;width:96px;font-size:11.5px;color:#333;">0.00</div>
<div class="t r" style="left:909px;top:528.1px;height:23px;line-height:23px;width:96px;font-size:11.5px;color:#333;">72.50</div>
<div class="" style="left:474px;top:525px;width:536px;height:1px;background:#d2d2d2;"></div>
<div class="t " style="left:481px;top:553.2px;height:23px;line-height:23px;">会社横断業務</div>
<div class="t r" style="left:709px;top:553.1px;height:23px;line-height:23px;width:96px;font-size:11.5px;color:#333;">36.25</div>
<div class="t r" style="left:809px;top:553.1px;height:23px;line-height:23px;width:96px;font-size:11.5px;color:#333;">47.50</div>
<div class="t r" style="left:909px;top:553.1px;height:23px;line-height:23px;width:96px;font-size:11.5px;color:#333;">15.50</div>
<div class="" style="left:474px;top:550px;width:536px;height:1px;background:#d2d2d2;"></div>
<div class="t " style="left:481px;top:578.2px;height:23px;line-height:23px;">総務部 業務</div>
<div class="t r" style="left:709px;top:578.1px;height:23px;line-height:23px;width:96px;font-size:11.5px;color:#333;">9.00</div>
<div class="t r" style="left:809px;top:578.1px;height:23px;line-height:23px;width:96px;font-size:11.5px;color:#333;">5.50</div>
<div class="t r" style="left:909px;top:578.1px;height:23px;line-height:23px;width:96px;font-size:11.5px;color:#333;">3.75</div>
<div class="" style="left:474px;top:575px;width:536px;height:1px;background:#d2d2d2;"></div>
<div class="t " style="left:481px;top:603.2px;height:23px;line-height:23px;">Z機器試作開発</div>
<div class="t r" style="left:709px;top:603.1px;height:23px;line-height:23px;width:96px;font-size:11.5px;color:#333;">0.00</div>
<div class="t r" style="left:809px;top:603.1px;height:23px;line-height:23px;width:96px;font-size:11.5px;color:#333;">0.00</div>
<div class="t r" style="left:909px;top:603.1px;height:23px;line-height:23px;width:96px;font-size:11.5px;color:#333;">112.00</div>
<div class="" style="left:474px;top:600px;width:536px;height:1px;background:#d2d2d2;"></div>
<div class="t " style="left:481px;top:628.2px;height:23px;line-height:23px;">会社横断業務</div>
<div class="t r" style="left:709px;top:628.1px;height:23px;line-height:23px;width:96px;font-size:11.5px;color:#333;">3.00</div>
<div class="t r" style="left:809px;top:628.1px;height:23px;line-height:23px;width:96px;font-size:11.5px;color:#333;">10.00</div>
<div class="t r" style="left:909px;top:628.1px;height:23px;line-height:23px;width:96px;font-size:11.5px;color:#333;">3.50</div>
<div class="" style="left:474px;top:625px;width:536px;height:1px;background:#d2d2d2;"></div>
<div class="t " style="left:481px;top:653.2px;height:23px;line-height:23px;">総務部 業務</div>
<div class="t r" style="left:709px;top:653.1px;height:23px;line-height:23px;width:96px;font-size:11.5px;color:#333;">149.00</div>
<div class="t r" style="left:809px;top:653.1px;height:23px;line-height:23px;width:96px;font-size:11.5px;color:#333;">174.00</div>
<div class="t r" style="left:909px;top:653.1px;height:23px;line-height:23px;width:96px;font-size:11.5px;color:#333;">36.50</div>
<div class="" style="left:474px;top:650px;width:536px;height:1px;background:#d2d2d2;"></div>
<div class="" style="left:353px;top:351px;width:1px;height:329px;background:#d2d2d2;"></div>
<div class="" style="left:474px;top:351px;width:1px;height:329px;background:#d2d2d2;"></div>
<div class="" style="left:214px;top:500px;width:261px;height:1px;background:#d2d2d2;"></div>
<div class="" style="left:353px;top:600px;width:122px;height:1px;background:#d2d2d2;"></div>
<div class="" style="left:214px;top:675px;width:796px;height:1px;background:#d2d2d2;"></div>
<div class="" style="left:214px;top:676px;width:795px;height:4px;background:#f3f3f3;"></div>
<svg style="left:221.3px;top:420px" width="8" height="8" viewBox="0 0 8 8"><path d="M7.2 0.4V7.4H0.2Z" fill="#222"/></svg>
<div class="t " style="left:239px;top:415.4px;height:22px;line-height:22px;">開発2課</div>
<svg style="left:221.3px;top:582.8px" width="8" height="8" viewBox="0 0 8 8"><path d="M7.2 0.4V7.4H0.2Z" fill="#222"/></svg>
<div class="t " style="left:239px;top:578px;height:22px;line-height:22px;">総務･庶務課</div>
<svg style="left:361.3px;top:420px" width="8" height="8" viewBox="0 0 8 8"><path d="M7.2 0.4V7.4H0.2Z" fill="#222"/></svg>
<div class="t " style="left:379px;top:415.2px;height:22px;line-height:22px;">柴田 智彦</div>
<svg style="left:361.3px;top:544.9px" width="8" height="8" viewBox="0 0 8 8"><path d="M7.2 0.4V7.4H0.2Z" fill="#222"/></svg>
<div class="t " style="left:379px;top:540px;height:22px;line-height:22px;">佐野 俊二</div>
<svg style="left:361.3px;top:632.9px" width="8" height="8" viewBox="0 0 8 8"><path d="M7.2 0.4V7.4H0.2Z" fill="#222"/></svg>
<div class="t " style="left:379px;top:628px;height:22px;line-height:22px;">中村 恵理子</div>
<div class="" style="left:214px;top:684px;width:1050px;height:1px;background:#c8c8c8;"></div>
<div class="" style="left:724px;top:676px;width:30px;height:8px;background:#f0f1f6;border:1px solid #c4c4c4;border-bottom:none;"></div>
<svg style="left:734px;top:678px" width="10" height="5" viewBox="0 0 10 5"><path d="M1 4.4H9L5 0.8Z" fill="#a6a6a6"/></svg>
<svg style="left:1253px;top:352px" width="10" height="7" viewBox="0 0 10 7"><path d="M0.8 6.2H9.2L5 0.8Z" fill="#5f5f5f"/></svg>
<svg style="left:1253px;top:672px" width="10" height="7" viewBox="0 0 10 7"><path d="M0.8 0.8H9.2L5 6.2Z" fill="#5f5f5f"/></svg>
<div class="" style="left:1255px;top:580px;width:6px;height:81px;background:#5f5f5f;border-radius:3px;"></div>
<svg style="left:1053px;top:316px" width="15" height="22" viewBox="0 0 15 22"><path d="M1.3 1.4V17.5L5.4 14L7.7 19.2Q8.9 20.1 10.3 19.1L8.2 13.7H12.6Z" fill="#fff" stroke="#16161e" stroke-width="1" stroke-linejoin="round"/></svg>
</div>
</body></html>
